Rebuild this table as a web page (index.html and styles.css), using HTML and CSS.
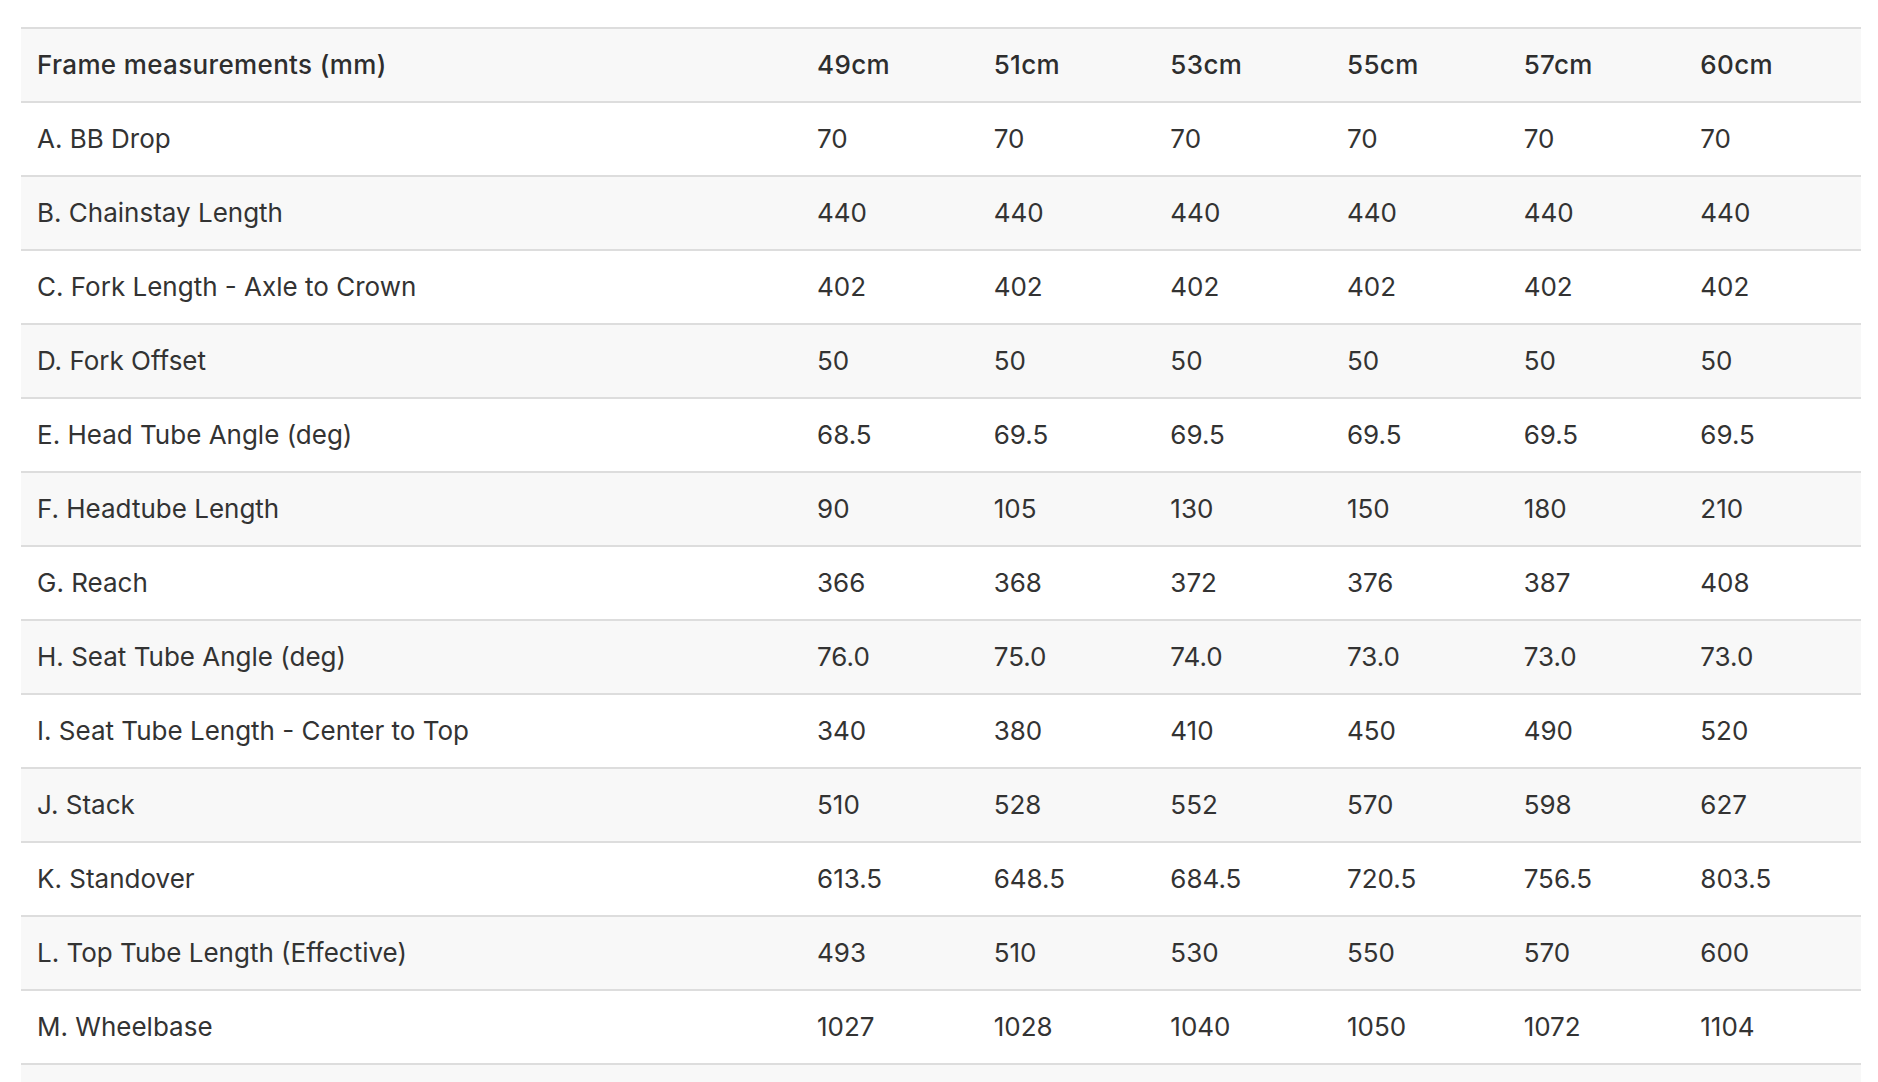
FILE: index.html
```html
<!DOCTYPE html>
<html lang="en">
<head>
<meta charset="utf-8">
<title>Frame measurements</title>
<link rel="stylesheet" href="styles.css">
</head>
<body>
<div class="wrap">
<table class="geo">
  <colgroup>
    <col class="c-label">
    <col class="c-size"><col class="c-size"><col class="c-size">
    <col class="c-size"><col class="c-size"><col class="c-size">
  </colgroup>
  <thead>
    <tr class="head">
      <th>Frame measurements (mm)</th><th>49cm</th><th>51cm</th><th>53cm</th><th>55cm</th><th>57cm</th><th>60cm</th>
    </tr>
  </thead>
  <tbody>
    <tr><td>A. BB Drop</td><td>70</td><td>70</td><td>70</td><td>70</td><td>70</td><td>70</td></tr>
    <tr><td>B. Chainstay Length</td><td>440</td><td>440</td><td>440</td><td>440</td><td>440</td><td>440</td></tr>
    <tr><td>C. Fork Length - Axle to Crown</td><td>402</td><td>402</td><td>402</td><td>402</td><td>402</td><td>402</td></tr>
    <tr><td>D. Fork Offset</td><td>50</td><td>50</td><td>50</td><td>50</td><td>50</td><td>50</td></tr>
    <tr><td>E. Head Tube Angle (deg)</td><td>68.5</td><td>69.5</td><td>69.5</td><td>69.5</td><td>69.5</td><td>69.5</td></tr>
    <tr><td>F. Headtube Length</td><td>90</td><td>105</td><td>130</td><td>150</td><td>180</td><td>210</td></tr>
    <tr><td>G. Reach</td><td>366</td><td>368</td><td>372</td><td>376</td><td>387</td><td>408</td></tr>
    <tr><td>H. Seat Tube Angle (deg)</td><td>76.0</td><td>75.0</td><td>74.0</td><td>73.0</td><td>73.0</td><td>73.0</td></tr>
    <tr><td>I. Seat Tube Length - Center to Top</td><td>340</td><td>380</td><td>410</td><td>450</td><td>490</td><td>520</td></tr>
    <tr><td>J. Stack</td><td>510</td><td>528</td><td>552</td><td>570</td><td>598</td><td>627</td></tr>
    <tr><td>K. Standover</td><td>613.5</td><td>648.5</td><td>684.5</td><td>720.5</td><td>756.5</td><td>803.5</td></tr>
    <tr><td>L. Top Tube Length (Effective)</td><td>493</td><td>510</td><td>530</td><td>550</td><td>570</td><td>600</td></tr>
    <tr><td>M. Wheelbase</td><td>1027</td><td>1028</td><td>1040</td><td>1050</td><td>1072</td><td>1104</td></tr>
    <tr><td>&nbsp;</td><td></td><td></td><td></td><td></td><td></td><td></td></tr>
  </tbody>
</table>
</div>
</body>
</html>
```
FILE: styles.css
```css
html, body {
  margin: 0;
  padding: 0;
  background: #ffffff;
}

body {
  font-family: "Inter", "Open Sans", sans-serif;
  color: #333333;
}

.wrap {
  padding: 27px 17px 0 21px;
}

.geo {
  width: 1840px;
  border-collapse: collapse;
  table-layout: fixed;
  font-size: 26px;
}

.c-label {
  width: 780px;
}

.c-size {
  width: 176.67px;
}

.geo tr {
  border-top: 2px solid #dddddd;
  border-bottom: 2px solid #dddddd;
}

.geo th,
.geo td {
  height: 72px;
  padding: 0 0 0 16px;
  text-align: left;
  vertical-align: middle;
  white-space: nowrap;
  line-height: 1;
}

.geo th {
  font-weight: 500;
  letter-spacing: 0.35px;
  color: #2e2e2e;
}

.geo td {
  font-weight: 400;
}

.head,
.geo tbody tr:nth-child(even) {
  background: #f8f8f8;
}

.geo tbody tr:nth-child(odd) {
  background: #ffffff;
}
```
